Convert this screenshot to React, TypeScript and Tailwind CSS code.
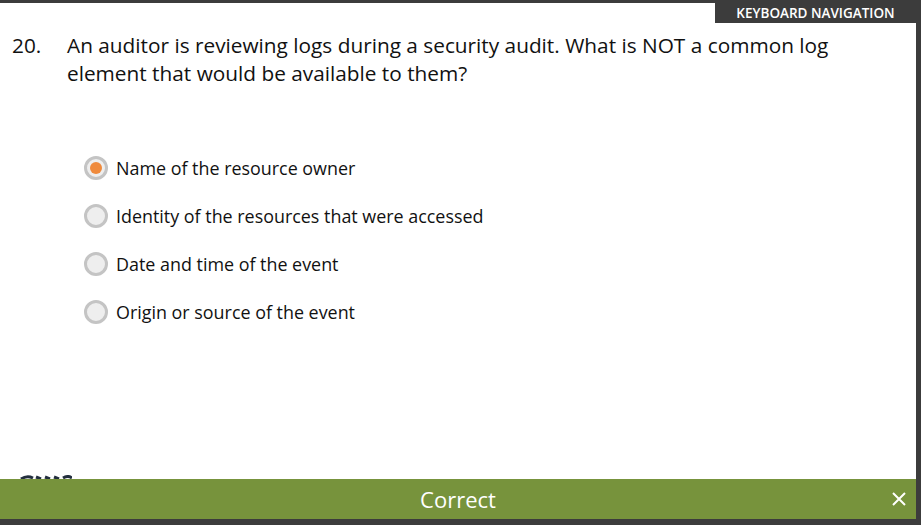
const options = [
  "Name of the resource owner",
  "Identity of the resources that were accessed",
  "Date and time of the event",
  "Origin or source of the event",
];

export default function App() {
  return (
    <div className="w-[921px] h-[525px] bg-[#3c3c3c] pt-[3px] pr-[5px] pb-[6px] font-['Open_Sans',sans-serif]">
      <div className="h-full bg-white flex flex-col">
        {/* Keyboard tab */}
        <div className="flex justify-end">
          <div className="w-[201px] h-[20px] -mt-[3px] pt-[3px] box-content bg-[#3c3c3c] text-white text-[13.5px] font-semibold leading-[20px] text-center">
            KEYBOARD NAVIGATION
          </div>
        </div>

        {/* Question */}
        <div className="flex mt-[8px] text-[20.8px] leading-[28px] text-[#111]">
          <span className="w-[67px] pl-[12px] shrink-0">20.</span>
          <p className="w-[800px]">
            An auditor is reviewing logs during a security audit. What is NOT a common log element that would be
            available to them?
          </p>
        </div>

        {/* Options */}
        <div className="flex flex-col mt-[69px] pl-[84px] gap-[24px]">
          {options.map((o, i) => (
            <div key={o} className="flex items-center h-[24px] gap-[8px] text-[17.9px] text-[#111]">
              <span className="w-[24px] h-[24px] rounded-full border-[3px] border-[#c4c4c4] bg-[#eeeeee] flex items-center justify-center">
                {i === 0 && <span className="w-[12px] h-[12px] rounded-full bg-[#ef8a3c]" />}
              </span>
              <span>{o}</span>
            </div>
          ))}
        </div>

        <div className="flex-1" />

        {/* aws logo, mostly hidden behind the bar */}
        <div className="h-[4px] overflow-hidden pl-[18px]">
          <svg width="54" height="4" viewBox="0 0 54 4">
            <path d="M3 4Q9 0 15 3M18 2L23 4M27 2L32 4M36 2L41 4M45 3Q50 0 54 3" stroke="#232f3e" strokeWidth="3" fill="none" />
          </svg>
        </div>

        {/* Result bar */}
        <div className="h-[40px] bg-[#77933c] flex items-center relative">
          <span className="flex-1 text-center text-white text-[22px] leading-none">Correct</span>
          <svg className="absolute right-[10px] top-[13px]" width="14" height="14" viewBox="0 0 14 14">
            <path d="M1 1L13 13M13 1L1 13" stroke="white" strokeWidth="2" />
          </svg>
        </div>
      </div>
    </div>
  );
}
